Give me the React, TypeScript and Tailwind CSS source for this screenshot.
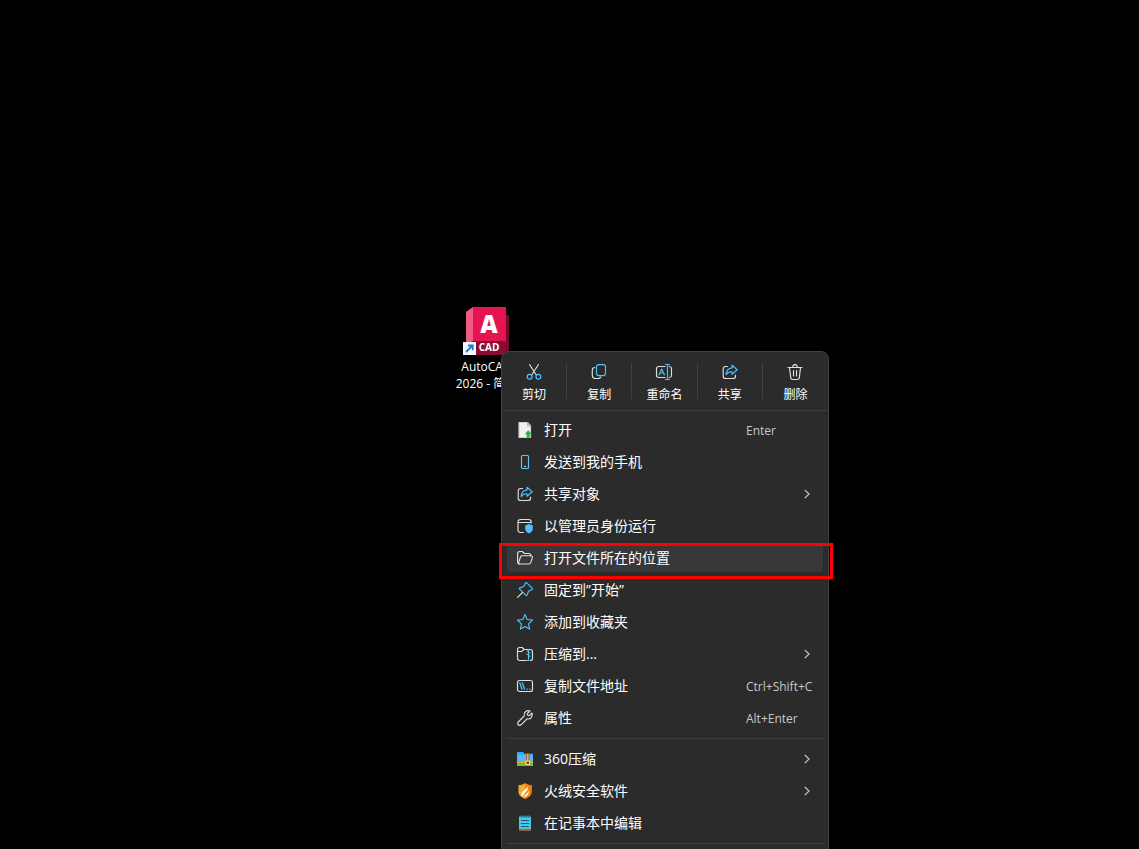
import type { ReactNode } from "react";

const WHITE = "#dedede";
const BLUE = "#4cc2ff";

type IconProps = { children: ReactNode };

const Icon = ({ children }: IconProps) => (
  <svg
    viewBox="0 0 16 16"
    fill="none"
    stroke={WHITE}
    strokeWidth="1.15"
    strokeLinecap="round"
    strokeLinejoin="round"
    className="size-4 shrink-0 overflow-visible"
    aria-hidden="true"
  >
    {children}
  </svg>
);

const CutIcon = () => (
  <Icon>
    <path d="M3.5 .5L10.3 11M12.5 .5L5.7 11" />
    <circle cx="3.6" cy="12.8" r="2.4" stroke={BLUE} />
    <circle cx="12.4" cy="12.8" r="2.4" stroke={BLUE} />
  </Icon>
);

const CopyIcon = () => (
  <Icon>
    <path d="M3.8 3.5C2.200 3.500 1.300 4.400 1.300 6v5.600c0 1.800 1 2.900 2.800 2.900h3.200c1.200 0 2-.5 2.400-1.500" />
    <rect x="5.500" y=".6" width="9" height="11" rx="2.400" stroke={BLUE} />
  </Icon>
);

const RenameIcon = () => (
  <Icon>
    <path d="M9 2.500H2.800C1.300 2.500.5 3.300.5 4.700v6.600c0 1.400.8 2.200 2.300 2.200H9M13.500 2.500c1.300.1 2 .9 2 2.200v6.600c0 1.300-.7 2.100-2 2.200" />
    <path d="M3 10.800L5.700 5l2.700 5.800M3.900 9h3.600" stroke={BLUE} />
    <path d="M11.500 .5v15M9.500 .5h4M9.500 15.500h4" stroke={BLUE} />
  </Icon>
);

const ShareIcon = () => (
  <Icon>
    <path d="M5.500 2.500H3.600C2 2.500 1.200 3.400 1.200 4.800v7.400c0 1.500.8 2.300 2.400 2.300h7.500c1.600 0 2.400-.8 2.400-2.300V11" />
    <path
      d="M10 1.300l5.200 4.500-5.200 4.400V7.800C7.300 7.600 5.500 8.600 4.200 10.600 4.400 6.900 6.400 4.200 10 3.900z"
      stroke={BLUE}
    />
  </Icon>
);

const DeleteIcon = () => (
  <Icon>
    <path d="M1 3.500h14M5.800 3.300C5.800 1.500 6.600.6 8 .6s2.200.9 2.200 2.700M2.500 3.500l1.200 10.100c.1 1.200.8 1.900 1.900 1.900h4.800c1.100 0 1.800-.7 1.900-1.900l1.200-10.100M6.500 6.500v5.500M9.500 6.500v5.500" />
  </Icon>
);

const OpenIcon = () => (
  <Icon>
    <path d="M2 .5h8.500l3 3v12H2z" fill="#f1f1f1" stroke="#cfcfcf" />
    <path d="M10.500 .8v3h3z" fill="#c4c4c4" stroke="#9b9b9b" strokeWidth=".6" />
    <path d="M11.200 8.200l3.500 4h-2v3.600H9.700v-3.600h-2z" fill="#22b52d" stroke="none" />
  </Icon>
);

const PhoneIcon = () => (
  <Icon>
    <rect x="4.500" y="1.500" width="7" height="13" rx="1" stroke="#67c5e8" />
    <path d="M7.300 12.300h1.500" stroke="#67c5e8" />
  </Icon>
);

const AdminIcon = () => (
  <Icon>
    <path d="M6.500 14.500H3.600C2.100 14.500 1 13.700 1 12V4C1 2.300 2.100 1.500 3.600 1.500h8C13.200 1.500 14.200 2.300 14.200 4v1M1 4.500h13" />
    <path
      d="M12 5.800c1 .9 2.200 1.300 3.800 1.400v3.400c0 2.400-1.300 4-3.800 4.900-2.500-.9-3.800-2.500-3.800-4.900V7.200c1.600-.1 2.800-.5 3.800-1.400z"
      fill={BLUE}
      stroke="none"
    />
  </Icon>
);

const FolderIcon = () => (
  <Icon>
    <path d="M2.300 14C1.200 14 .6 13.200.6 12V3.700C.6 2.300 1.400 1.500 2.700 1.500h2.600L7.400 3.500h4.300c1.300 0 2 .7 2 2v.2" />
    <path d="M5.200 5.700h8.600c1.300 0 1.900.8 1.500 1.900l-1.500 4.700c-.3 1-.9 1.700-1.900 1.700H2.500c-.9 0-1.200-.7-.9-1.500L3.600 6.800c.3-.7.8-1.100 1.600-1.100z" />
  </Icon>
);

const PinIcon = () => (
  <Icon>
    <path
      d="M9.800 .9l5.300 5.300c.5.500.3 1.200-.3 1.500l-3.300 1.600-1.400 3.800c-.2.600-.8.700-1.200.3L2.600 7.100c-.4-.4-.3-1 .3-1.200l3.800-1.400 1.600-3.300c.3-.6 1-.8 1.500-.3z"
      stroke={BLUE}
    />
    <path d="M5.500 10.500L.6 15.400" />
  </Icon>
);

const StarIcon = () => (
  <Icon>
    <path
      d="M8 .6l2.200 4.900 5.300.6-3.900 3.700 1 5.300L8 12.500l-4.600 2.600 1-5.300L.5 6.100l5.300-.6z"
      stroke={BLUE}
    />
  </Icon>
);

const ZipIcon = () => (
  <Icon>
    <path d="M9.500 14.500H2.800C1.300 14.500.5 13.700.5 12.200V3.600C.5 2.300 1.300 1.500 2.600 1.500h2.600l2 2h6c1.500 0 2.300.8 2.300 2.200v6.500c0 1.500-.8 2.300-2.300 2.300M.5 5.500h4L7 3.600" />
    <path
      d="M11.500 3.500v9.500M10 5h1.500M11.500 6.700H13M10 8.400h1.500M11.500 10.100H13M10 14.500h1.500V12"
      stroke={BLUE}
    />
  </Icon>
);

const PathIcon = () => (
  <Icon>
    <rect x=".5" y="2.500" width="15" height="11" rx="2" />
    <path d="M2.800 4.800l2.200 6.400M5.300 4.800l2.200 6.400M10 11.200h.3M12.800 11.200h.3" stroke={BLUE} strokeWidth="1.300" />
  </Icon>
);

const WrenchIcon = () => (
  <Icon>
    <path d="M13 1C9.600-.3 6.200 2.500 7.200 6L1.200 12c-1.700 1.900.8 4.500 2.800 2.800L10 8.800c3.500.9 6.300-2.400 5-5.800l-2.700 2.700-1.600-.4-.4-1.600z" />
  </Icon>
);

const Zip360Icon = () => (
  <Icon>
    <g stroke="none">
      <path d="M0 1h6l1.500 1.700H16V12H0z" fill="#38a8f5" />
      <path d="M0 4h16v7H0z" fill="#52b9fb" />
      <path d="M0 11h16v1.800H0z" fill="#f7a823" />
      <path d="M0 12.800h16V15H0z" fill="#77bf35" />
      <path d="M9 2.700h3.600V15H9z" fill="#b5651f" />
      <path d="M10.300 2.700h1V10h-1z" fill="#f4d16b" />
      <rect x="9" y="10" width="3.600" height="3.600" rx=".5" fill="#5c4021" stroke="#ffe293" />
    </g>
  </Icon>
);

const HuorongIcon = () => (
  <Icon>
    <g stroke="none">
      <path d="M8 .3C10 1.600 12.200 2.200 14.500 2.200v6.500c0 3.400-2.400 5.700-6.500 7-4.100-1.300-6.500-3.600-6.500-7V2.200C3.800 2.200 6 1.600 8 .3z" fill="#ffab24" />
      <path d="M8 .3C10 1.600 12.200 2.200 14.500 2.200v6.500c0 3.400-2.400 5.700-6.500 7z" fill="#f97f0d" />
      <path d="M10.500 3.200c.2 2.500-5.700 4.300-5.900 7.700-.1 1.300.4 2.100 1.200 2.700-.1-2.300 2.500-3.400 4.200-5.900.9-1.400 1.100-2.900.5-4.500z" fill="#fff" />
      <path d="M11.700 7.200c.7 2.800-.7 5.600-4.300 6.900 0-2.300 3.600-3.500 4.300-6.900z" fill="#fff" />
    </g>
  </Icon>
);

const NotepadIcon = () => (
  <Icon>
    <rect x="2" y="1.500" width="12" height="13" rx=".5" fill="#4cc5e6" stroke="none" />
    <path d="M2 14.500h12v1.300H2z" fill="#c9682c" stroke="none" />
    <path d="M4.500 .5v2M7 .5v2M9.500 .5v2M12 .5v2" stroke="#227a9e" />
    <path d="M4.500 5.500h7M4.500 8.500h7M4.500 11.500h7" stroke="#12607d" />
  </Icon>
);

const Chevron = () => (
  <svg viewBox="0 0 6 10" fill="none" stroke="#c8c8c8" strokeWidth="1.200" className="h-[10px] w-[6px]" aria-hidden="true">
    <path d="M.8 .8L5 5 .8 9.200" />
  </svg>
);

const AutoCadLogo = () => (
  <svg viewBox="0 0 48 48" className="size-12" aria-hidden="true">
    <path d="M3 5L10 0h32l1 1v7h3v40H3z" fill="#770a2a" />
    <path d="M10 0v34l-7 4V5z" fill="#f05a83" />
    <path d="M10 0h32c.6 0 1 .4 1 1v33H10z" fill="#e5134f" />
    <path d="M3 38l7-4h33v14H3z" fill="#8b0c32" />
    <text x="26" y="26" textAnchor="middle" fontFamily="Open Sans" fontSize="24" fontWeight="800" fill="#fff">
      A
    </text>
    <text x="26" y="44" textAnchor="middle" fontFamily="Open Sans" fontSize="10" fontWeight="700" fill="#fff">
      CAD
    </text>
    <path d="M0 35h13v13H0z" fill="#f5f8fb" />
    <path d="M3 45l6-6M5 38.500h4.700v4.700" fill="none" stroke="#1979cf" strokeWidth="1.800" />
  </svg>
);

const quickActions = [
  { label: "剪切", icon: <CutIcon /> },
  { label: "复制", icon: <CopyIcon /> },
  { label: "重命名", icon: <RenameIcon /> },
  { label: "共享", icon: <ShareIcon /> },
  { label: "删除", icon: <DeleteIcon /> },
];

type MenuEntry = {
  label: string;
  icon: ReactNode;
  shortcut?: string;
  submenu?: boolean;
  active?: boolean;
};

const mainEntries: MenuEntry[] = [
  { label: "打开", icon: <OpenIcon />, shortcut: "Enter" },
  { label: "发送到我的手机", icon: <PhoneIcon /> },
  { label: "共享对象", icon: <ShareIcon />, submenu: true },
  { label: "以管理员身份运行", icon: <AdminIcon /> },
  { label: "打开文件所在的位置", icon: <FolderIcon />, active: true },
  { label: "固定到”开始”", icon: <PinIcon /> },
  { label: "添加到收藏夹", icon: <StarIcon /> },
  { label: "压缩到...", icon: <ZipIcon />, submenu: true },
  { label: "复制文件地址", icon: <PathIcon />, shortcut: "Ctrl+Shift+C" },
  { label: "属性", icon: <WrenchIcon />, shortcut: "Alt+Enter" },
];

const appEntries: MenuEntry[] = [
  { label: "360压缩", icon: <Zip360Icon />, submenu: true },
  { label: "火绒安全软件", icon: <HuorongIcon />, submenu: true },
  { label: "在记事本中编辑", icon: <NotepadIcon /> },
];

function MenuItem({ label, icon, shortcut, submenu, active }: MenuEntry) {
  return (
    <li className="relative px-[5px] py-0.5">
      <button
        type="button"
        className={`flex h-7 w-full items-center rounded pl-[10px] text-left ${active ? "bg-[#383838]" : "hover:bg-[#383838]"}`}
      >
        {icon}
        <span className="ml-[11px] flex-1 text-sm leading-5 text-white">{label}</span>
        {shortcut && <span className="w-[77px] pt-0.5 text-xs whitespace-nowrap text-[#c8c8c8]">{shortcut}</span>}
        {submenu && (
          <span className="pr-[13px]">
            <Chevron />
          </span>
        )}
      </button>
      {/* Red callout frame */}
      {active && (
        <div className="pointer-events-none absolute top-px -right-[5px] -bottom-[5px] -left-[3px] border-3 border-[#ff0000]" />
      )}
    </li>
  );
}

export default function App() {
  return (
    <main className="relative h-screen w-full overflow-hidden bg-black font-['Open_Sans','Noto_Sans_CJK_SC',sans-serif]">
      {/* Desktop shortcut */}
      <a
        href="#autocad"
        className="absolute top-[307px] left-[446px] flex w-[81px] flex-col items-center text-center text-xs leading-[17px] text-white"
      >
        <AutoCadLogo />
        <span className="mt-[3px]">AutoCAD</span>
        <span className="whitespace-nowrap">2026 - 简体</span>
      </a>

      {/* Context menu */}
      <div className="absolute top-[351px] left-[501px] w-[328px] rounded-lg border border-[#404040] bg-[#2b2b2b] pb-12">
        <div className="grid grid-cols-5 border-b border-[#3d3d3d] py-[11px]">
          {quickActions.map(({ label, icon }) => (
            <button
              key={label}
              type="button"
              className="flex h-9 flex-col items-center gap-[5px] border-r border-[#404040] pt-px text-xs leading-5 text-white last:border-r-0"
            >
              {icon}
              <span>{label}</span>
            </button>
          ))}
        </div>
        <ul className="pt-[3px] pb-1">
          {mainEntries.map((entry) => (
            <MenuItem key={entry.label} {...entry} />
          ))}
        </ul>
        <hr className="mx-1 border-[#3d3d3d]" />
        <ul className="py-1">
          {appEntries.map((entry) => (
            <MenuItem key={entry.label} {...entry} />
          ))}
        </ul>
        <hr className="mx-1 border-[#3d3d3d]" />
      </div>
    </main>
  );
}
